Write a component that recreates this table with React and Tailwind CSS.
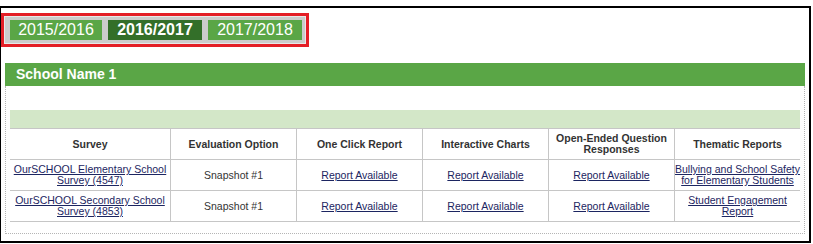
import React from "react";

const years = [
  { label: "2015/2016", w: "w-[92px]", active: false },
  { label: "2016/2017", w: "w-[94px]", active: true },
  { label: "2017/2018", w: "w-[94px]", active: false },
];

const headers = [
  "Survey",
  "Evaluation Option",
  "One Click Report",
  "Interactive Charts",
  "Open-Ended Question Responses",
  "Thematic Reports",
];

const rows = [
  [["OurSCHOOL Elementary School", "Survey (4547)"], "Snapshot #1", ["Report Available"], ["Report Available"], ["Report Available"], ["Bullying and School Safety", "for Elementary Students"]],
  [["OurSCHOOL Secondary School", "Survey (4853)"], "Snapshot #1", ["Report Available"], ["Report Available"], ["Report Available"], ["Student Engagement", "Report"]],
];

function Link({ lines }) {
  return (
    <span className="underline text-[#1c2561] cursor-pointer whitespace-nowrap">
      {lines.map((l, i) => (
        <React.Fragment key={i}>
          {i > 0 && <br />}
          {l}
        </React.Fragment>
      ))}
    </span>
  );
}

export default function App() {
  return (
    <div className="bg-white pt-[6px] w-[813px] h-[244px]" style={{ fontFamily: '"Liberation Sans", Arial, sans-serif' }}>
      <div className="w-[811px] h-[237px] border-l border-t-2 border-r-2 border-b-2 border-black">
        <div className="pt-[5px]">
          <div className="w-[308px] h-[34px] border-[3px] border-[#e41e26]">
            <div className="h-full border border-[#e8e8e8] bg-[#cccccc] flex items-center gap-[6px] pl-[5px]">
              {years.map((y) => (
                <div
                  key={y.label}
                  className={`${y.w} h-[20px] flex items-center justify-center text-white text-[16px] leading-none ${y.active ? "bg-[#336f29] font-bold" : "bg-[#5aa646]"}`}
                >
                  {y.label}
                </div>
              ))}
            </div>
          </div>
        </div>

        <div className="ml-[4px] mt-[16px] w-[800px]">
          <div className="h-[23px] bg-[#5aa646] flex items-center pl-[11px] text-white font-bold text-[14px]">
            School Name 1
          </div>
          <div className="h-[148px] border-l border-r border-b border-dotted border-[#b5b5b5] px-[4px] pt-[24px]">
            <div className="h-[18px] bg-[#d3e7c8]" />
            <div className="grid grid-cols-[160px_repeat(5,126px)] text-[10.5px] leading-[11px] text-[#333]">
              {headers.map((h, i) => (
                <div
                  key={h}
                  className={`h-[32px] border-t border-b border-[#c6c6c6] flex items-center justify-center text-center font-bold px-[2px] ${i > 0 ? "border-l" : ""}`}
                >
                  {h}
                </div>
              ))}
              {rows.map((r, ri) =>
                r.map((c, i) => (
                  <div
                    key={ri + "-" + i}
                    className={`h-[31px] border-b border-[#c6c6c6] flex items-center justify-center text-center px-0 ${i > 0 ? "border-l" : ""}`}
                  >
                    {i === 1 ? c : <Link lines={c} />}
                  </div>
                ))
              )}
            </div>
          </div>
        </div>
      </div>
    </div>
  );
}
